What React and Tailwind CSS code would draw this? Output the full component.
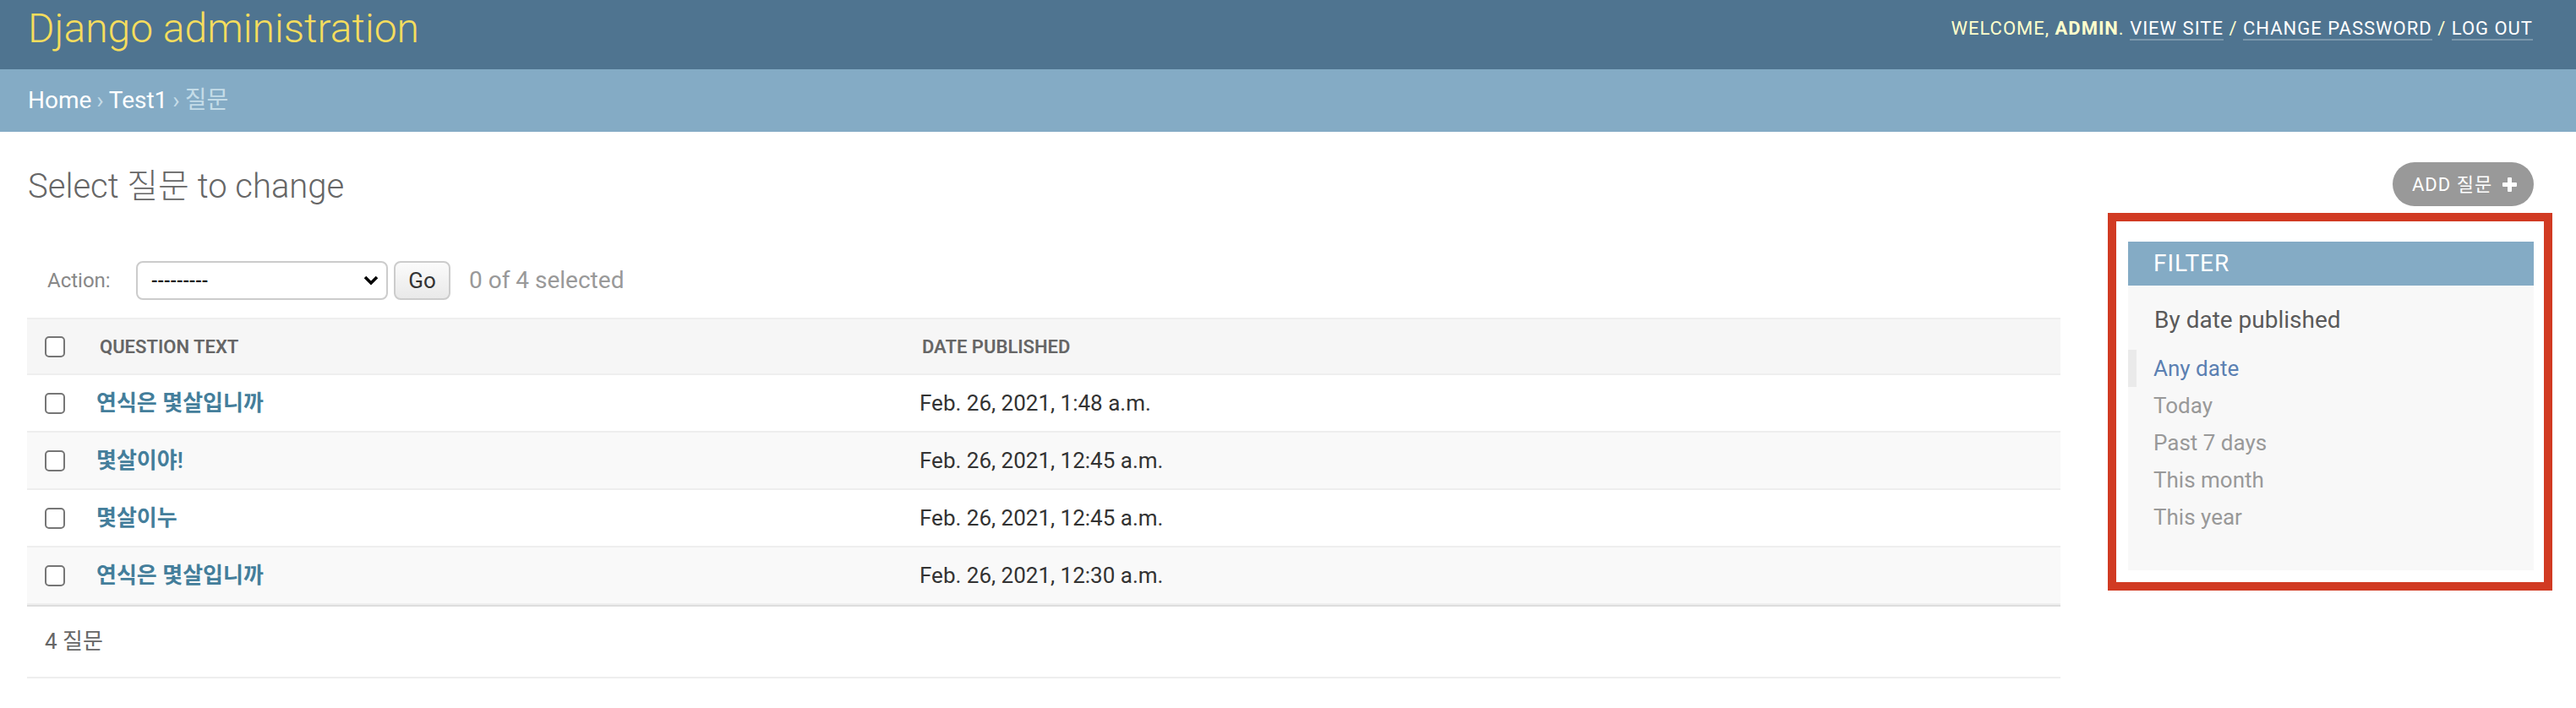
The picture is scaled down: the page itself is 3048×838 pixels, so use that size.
import React from "react";

const rows = [
  { q: "연식은 몇살입니까", d: "Feb. 26, 2021, 1:48 a.m." },
  { q: "몇살이야!", d: "Feb. 26, 2021, 12:45 a.m." },
  { q: "몇살이누", d: "Feb. 26, 2021, 12:45 a.m." },
  { q: "연식은 몇살입니까", d: "Feb. 26, 2021, 12:30 a.m." },
];

const filters = ["Any date", "Today", "Past 7 days", "This month", "This year"];

function Checkbox() {
  return <span className="block h-[25px] w-[24px] rounded-[5px] border-2 border-[#767676] bg-white" />;
}

export default function App() {
  return (
    <div className="min-h-[838px] w-[3048px] bg-white font-['Roboto','Noto_Sans_CJK_KR',sans-serif] text-[#333]">
      <header className="flex h-[82px] items-start justify-between bg-[#4f7490] pl-[33px] pr-[51px]">
        <h1 className="mt-[10px] text-[48px] font-light leading-none text-[#f5dd5d]">Django administration</h1>
        <div className="mt-[23px] text-[22px] uppercase leading-[22px] tracking-[1px] text-[#ffc]">
          Welcome, <strong className="font-bold">admin</strong>.{" "}
          <a className="border-b-2 border-white/25 text-white">View site</a> /{" "}
          <a className="border-b-2 border-white/25 text-white">Change password</a> /{" "}
          <a className="border-b-2 border-white/25 text-white">Log out</a>
        </div>
      </header>

      <nav className="flex h-[74px] items-center bg-[#84abc5] px-[33px] text-[28px] text-white">
        <a>Home</a>
        <span className="mx-[6px] text-[#c4dce8]">›</span>
        <a>Test1</a>
        <span className="mx-[6px] text-[#c4dce8]">›</span>
        <span className="text-[#c4dce8]">질문</span>
      </nav>

      <main className="pl-[32px] pr-[50px]">
        <div className="mt-[36px] flex h-[52px] items-center justify-between">
          <h1 className="pl-px pt-[5px] text-[40px] font-light leading-none text-[#666]">Select 질문 to change</h1>
          <a className="flex h-[52px] w-[167px] items-center rounded-full bg-[#999] pl-[23px] text-[22px] tracking-[1px] text-white">
            ADD 질문
            <svg className="ml-auto mr-[20px]" width="17" height="17" viewBox="0 0 17 17">
              <rect x="6" y="0" width="5" height="17" rx="1" fill="white" />
              <rect x="0" y="6" width="17" height="5" rx="1" fill="white" />
            </svg>
          </a>
        </div>

        <div className="mt-[8px] flex items-start gap-[56px]">
          <div className="flex-1">
            <div className="mt-[57px] flex h-[46px] items-center">
              <span className="w-[129px] pl-[24px] text-[24px] text-[#888]">Action:</span>
              <div className="flex h-[46px] w-[298px] items-center rounded-[8px] border-2 border-[#ccc] bg-white pl-[16px] pr-[8px] text-[22px] text-black">
                <span className="font-medium">---------</span>
                <svg className="ml-auto" width="20" height="14" viewBox="0 0 20 14">
                  <polyline points="3,3 10,10 17,3" fill="none" stroke="black" strokeWidth="3.6" />
                </svg>
              </div>
              <button className="ml-[7px] h-[46px] w-[67px] rounded-[8px] border-2 border-[#ccc] bg-linear-to-b from-[#fbfbfb] to-[#e9e9e9] text-[26px] text-[#333]">
                Go
              </button>
              <span className="ml-[22px] text-[28px] text-[#999]">0 of 4 selected</span>
            </div>

            <div className="mt-[21px]">
              <div className="grid h-[68px] grid-cols-[86px_973px_1fr] items-center border-y-2 border-[#eee] bg-[#f6f6f6] text-[22px] font-semibold uppercase text-[#666]">
                <div className="pl-[21px]"><Checkbox /></div>
                <div>Question text</div>
                <div>Date published</div>
              </div>
              {rows.map((r, i) => (
                <div
                  key={i}
                  className={`grid h-[68px] grid-cols-[86px_973px_1fr] items-center border-b-2 border-[#eee] text-[26px] ${i % 2 ? "bg-[#f9f9f9]" : "bg-white"}`}
                >
                  <div className="pl-[21px]"><Checkbox /></div>
                  <a className="-ml-[4px] font-semibold text-[#447e9b]">{r.q}</a>
                  <div className="-ml-[3px] text-[#333]">{r.d}</div>
                </div>
              ))}
              <div className="flex h-[87px] items-center border-y-2 border-t-[#ddd] border-b-[#eee] pl-[21px] text-[26px] text-[#666]">
                4 질문
              </div>
            </div>
          </div>

          <div className="-mr-[22px] w-[526px] border-[10px] border-[#d13a22] pb-[14px] pl-[14px] pr-[12px] pt-[24px]">
            <div className="bg-[#f8f8f8] pb-[41px]">
              <h2 className="flex h-[52px] items-center bg-[#84abc5] pl-[30px] text-[28px] uppercase tracking-[1px] text-white">Filter</h2>
              <h3 className="mt-[27px] pl-[31px] text-[28px] leading-[28px] text-[#5a5a5a]">By date published</h3>
              <ul className="mt-[21px]">
                {filters.map((f, i) => (
                  <li
                    key={f}
                    className={`flex h-[44px] items-center text-[26px] ${i === 0 ? "border-l-[10px] border-[#eaeaea] pl-[20px] text-[#5b80b2]" : "pl-[30px] text-[#999]"}`}
                  >
                    {f}
                  </li>
                ))}
              </ul>
            </div>
          </div>
        </div>
      </main>
    </div>
  );
}
